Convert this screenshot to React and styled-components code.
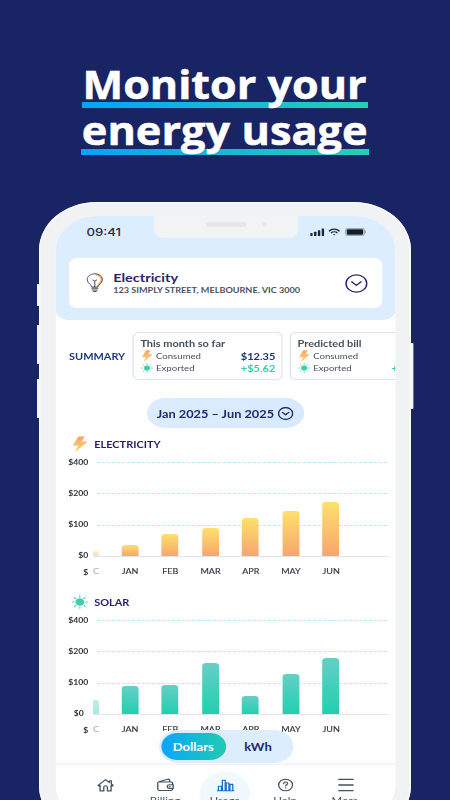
import React from 'react';
import styled, { createGlobalStyle } from 'styled-components';

const GlobalStyle = createGlobalStyle`
	* {
		box-sizing: border-box;
	}
	body {
		margin: 0;
		background: #182463;
		font-family: Lato, 'Liberation Sans', sans-serif;
	}
	svg {
		display: block;
		flex: none;
	}
`;

const Page = styled.div`
	width: 450px;
	height: 800px;
	overflow: hidden;
	background: #182463;
`;

const Heading = styled.h1`
	height: 202px;
	margin: 0;
	padding-top: 61px;
	display: flex;
	flex-direction: column;
	align-items: center;
	font: 700 39px/47px 'Open Sans', 'Noto Sans', sans-serif;
	color: #fff;
	-webkit-text-stroke: 0.5px #fff;
`;

const HeadingLine = styled.span`
	display: flex;
	justify-content: center;
	width: ${(p) => p.$width}px;
	height: 47px;
	white-space: nowrap;
	background: linear-gradient(90deg, #06a2fb, #25d0b2) 0 41px / 100% 6px no-repeat;

	span {
		transform: translateY(${(p) => p.$shift || 0}px) scaleX(${(p) => p.$stretch});
	}
`;

// the whole handset is laid out at 310 wide and stretched horizontally
const Phone = styled.div`
	position: relative;
	width: 310px;
	height: 632px;
	margin-left: 39px;
	padding: 14px 13px 14px 14px;
	border-radius: 48px;
	background: #f1f2f3;
	box-shadow: inset 0 0 2px 1px #fcfdfe;
	transform: scaleX(1.2);
	transform-origin: 0 0;
`;

const SideButton = styled.i`
	position: absolute;
	${(p) => (p.$right ? 'right' : 'left')}: -1.7px;
	top: ${(p) => p.$top}px;
	width: 2.5px;
	height: ${(p) => p.$height}px;
	border-radius: 1px;
	background: #f5f7fa;
`;

const Screen = styled.div`
	position: relative;
	height: 604px;
	border-radius: 34px;
	overflow: hidden;
	background: #fefeff;
	display: flex;
	flex-direction: column;
`;

const Header = styled.div`
	height: 104px;
	flex: none;
	border-radius: 0 0 10px 10px;
	background: #dceefe;
	padding: 0 11px;
`;

const Notch = styled.div`
	position: absolute;
	left: 82px;
	top: -2px;
	width: 120px;
	height: 24px;
	border-radius: 0 0 8px 8px;
	background: #f2f3f4;
	display: flex;
	align-items: center;
	padding: 0 0 3px 43px;
	gap: 13px;
`;

const Speaker = styled.i`
	width: 34px;
	height: 5px;
	border-radius: 3px;
	background: #e6e7e9;
`;

const Camera = styled.i`
	width: 4px;
	height: 5px;
	border-radius: 50%;
	background: #e8e9eb;
`;

const StatusBar = styled.div`
	height: 42px;
	padding: 11px 13.5px 0 14.5px;
	display: flex;
	justify-content: space-between;
	font: 500 11px/11px Inter, sans-serif;
	color: #1f2c3a;
`;

const StatusIcons = styled.div`
	display: flex;
	align-items: center;
	height: 10px;
	gap: 3.4px;
`;

const AccountCard = styled.div`
	height: 50px;
	border-radius: 7px;
	background: #fff;
	display: flex;
	align-items: center;
	padding: 0 12px 0 13.5px;
`;

const AccountInfo = styled.div`
	flex: 1;
	padding: 1px 0 0 8.3px;
	white-space: nowrap;
`;

const AccountName = styled.div`
	font-weight: 700;
	font-size: 12.1px;
	line-height: 14px;
	color: #2a2169;
`;

const Address = styled.div`
	font-weight: 700;
	font-size: 7.6px;
	line-height: 11px;
	color: #4a535e;
`;

const Summary = styled.div`
	height: 60px;
	flex: none;
	padding: 12px 0 0 11px;
	display: flex;
	align-items: center;
`;

const SummaryTitle = styled.div`
	width: 53px;
	flex: none;
	font-weight: 700;
	font-size: 9.15px;
	color: #1f3a85;
`;

const BillCard = styled.div`
	width: 125px;
	height: 48px;
	flex: none;
	margin-right: 6px;
	padding: 4px 5px 0 5.5px;
	border: 1px solid #dde4e8;
	border-radius: 5px;
	background: #fefefe;
`;

const BillTitle = styled.div`
	font-weight: 700;
	font-size: 9.15px;
	line-height: 13px;
	color: #43505a;
	white-space: nowrap;
`;

const BillRow = styled.div`
	height: 12px;
	display: flex;
	align-items: center;
	gap: 3px;
	font-size: 8px;
	color: #47525c;

	b {
		margin-left: auto;
		font-size: 9.2px;
		color: ${(p) => (p.$credit ? '#35cfa9' : '#1f3379')};
	}
`;

const PeriodPill = styled.div`
	align-self: flex-start;
	flex: none;
	width: 131.5px;
	height: 30px;
	margin: 18px 0 6px 75.5px;
	border-radius: 15px;
	background: linear-gradient(90deg, #dcebfd, #d6eafe);
	display: flex;
	align-items: center;
	justify-content: center;
	gap: 3.5px;
	font-weight: 700;
	font-size: 10.65px;
	color: #1b2a6d;
	white-space: nowrap;
`;

const Section = styled.div`
	height: ${(p) => p.$height}px;
	flex: none;
`;

const SectionTitle = styled.div`
	height: 20px;
	padding-left: 13px;
	display: flex;
	align-items: center;
	gap: 5px;
	font-weight: 700;
	font-size: 9.15px;
	color: #231f69;
`;

const Graph = styled.div`
	display: flex;
	padding: 7.5px 6px 0 0;
`;

const Axis = styled.div`
	width: 27px;
	margin: -15px 4px 0 0;
	text-align: right;
	font-weight: 700;
	font-size: 7.2px;
	line-height: 31px;
	color: #30353c;

	div {
		height: 31px;
	}
	div:nth-child(4) {
		padding-right: ${(p) => (p.$nudge ? 3.8 : 0)}px;
	}
	div:nth-child(5) {
		line-height: 4px;
	}
`;

const dash = 'repeating-linear-gradient(90deg, #bfe8fb 0 2.6px, #f3fbff 2.6px 4.2px)';

const Plot = styled.div`
	height: 95px;
	display: flex;
	align-items: flex-end;
	border-bottom: 1px solid #e2e5ea;
	background: ${dash} 3px 0 / 100% 1px no-repeat, ${dash} 3px 31px / 100% 1px no-repeat,
		${dash} 3px 63px / 100% 1px no-repeat;
`;

const Months = styled.div`
	display: flex;
	height: 12px;
	margin-top: 9.6px;
	font-size: 7.5px;
	line-height: 12px;
	color: #353b44;
	-webkit-text-stroke: 0.15px #353b44;
`;

const Slot = styled.div`
	width: ${(p) => (p.$first ? 14.2 : 33.5)}px;
	display: flex;
	justify-content: ${(p) => (p.$first ? 'flex-start' : 'center')};
	opacity: ${(p) => (p.$first ? 0.4 : 1)};
`;

const Bar = styled.div`
	width: ${(p) => (p.$first ? 4.5 : 14)}px;
	height: ${(p) => p.$value}px;
	border-radius: ${(p) => (p.$first ? '0 2px 0 0' : '3px 3px 0 0')};
	background: ${(p) =>
		p.$tone === 'solar' ? 'linear-gradient(#65cfc6, #22cfaf)' : 'linear-gradient(#fee06d, #f7a56d)'};
`;

const ToggleShade = styled.div`
	position: absolute;
	left: 84px;
	top: 515px;
	width: 88px;
	height: 20px;
	background: #fefeff;
`;

const Toggle = styled.div`
	position: absolute;
	left: 85.5px;
	top: 514px;
	width: 112.5px;
	height: 33px;
	padding: 3px 2px;
	border-radius: 17px;
	background: #dcedfe;
	display: flex;
	font-weight: 700;
	font-size: 10.9px;
`;

const ToggleOption = styled.div`
	width: 54px;
	height: 27px;
	border-radius: 14px;
	display: flex;
	align-items: center;
	justify-content: center;
	color: ${(p) => (p.$active ? '#fff' : '#20296c')};
	background: ${(p) => (p.$active ? 'linear-gradient(90deg, #08a6fb, #22cbb0)' : 'none')};
`;

const TabBar = styled.div`
	flex: 1;
	display: flex;
	padding-left: 16px;
	border-top: 1px solid #f0f2f4;
	box-shadow: 0 -1px 3px #f3f5f7;
	background: #fefeff;
`;

const Tab = styled.div`
	width: 50px;
	flex: none;
	display: flex;
	flex-direction: column;
	align-items: center;
	padding-top: 12.5px;
	font-size: 9.5px;
	line-height: 12px;
	color: #46576a;
	background: ${(p) => (p.$active ? 'radial-gradient(circle at 25px 28px, #f0fafe 20px, transparent 22px)' : 'none')};

	span {
		margin-top: 1.5px;
	}
`;

const ChevronCircle = ({ width, height, stroke }) => (
	<svg width={width} height={height} viewBox="0 0 18 18" fill="none" stroke="#29256b" strokeWidth={stroke}>
		<circle cx="9" cy="9" r="8.2" />
		<path d="M5.3 7.4L9 10.8l3.7-3.4" strokeLinecap="round" strokeLinejoin="round" />
	</svg>
);

const Bulb = () => (
	<svg width="15" height="20" viewBox="0 0 15 20" fill="none">
		<path d="M8 1.6c3.2 0 5.3 2.4 5.1 5.4-.2 2.6-2.4 3.8-3.3 6.2" stroke="#f9c15f" strokeWidth="1.9" />
		<path
			d="M5 14c-.2-2.4-3.6-3.6-3.8-7C1 3.4 3.8.8 7.5.8s6.4 2.6 6.3 6.1c-.1 3.4-3.5 4.6-3.8 7.1z"
			stroke="#342c60"
			strokeWidth=".75"
		/>
		<path d="M5.7 6.8l1.8 1.4 1.8-1.4M7.5 8.2V14" stroke="#342c60" strokeWidth=".8" />
		<path d="M5.2 15.2h4.7M5.4 17h4.2M6.4 18.5h2.2" stroke="#5b4a68" strokeWidth="1.2" strokeLinecap="round" />
	</svg>
);

const Bolt = ({ size = 16, width = 14 }) => (
	<svg width={width} height={size} viewBox="0 0 14 16" preserveAspectRatio="none">
		<defs>
			<linearGradient id="bolt" x1="0" y1="0" x2="0" y2="1">
				<stop offset="0" stopColor="#f9a568" />
				<stop offset="1" stopColor="#fcd76a" />
			</linearGradient>
		</defs>
		<path
			d="M6 .8h4.6L8.2 5.9h4.6L3.6 15.3l2.5-6.1H1.6z"
			fill="url(#bolt)"
			stroke="url(#bolt)"
			strokeWidth=".7"
			strokeLinejoin="round"
		/>
	</svg>
);

const Sun = ({ size = 16, width = 16 }) => (
	<svg width={width} height={size} viewBox="0 0 16 16" stroke="#4bcfb4" strokeWidth="1.1" strokeLinecap="round">
		<circle cx="8" cy="8" r="3.7" fill="#3ccdb1" />
		<path d="M8 .7v1.6M8 13.7v1.6M.7 8h1.6M13.7 8h1.6M2.8 2.8l1.3 1.3M11.9 11.9l1.3 1.3M2.8 13.2l1.3-1.3M11.9 4.1l1.3-1.3" />
	</svg>
);

const SignalIcons = () => (
	<StatusIcons>
		<svg width="12" height="8" viewBox="0 0 12 8" fill="#1b2732">
			<rect x="0" y="5" width="2" height="3" rx=".5" />
			<rect x="3.2" y="3.8" width="2" height="4.2" rx=".5" />
			<rect x="6.4" y="2.2" width="2" height="5.8" rx=".5" />
			<rect x="9.6" y=".6" width="2" height="7.4" rx=".5" />
		</svg>
		<svg width="10" height="8" viewBox="0 0 11 8" fill="none" stroke="#1b2732" strokeWidth="1.3" preserveAspectRatio="none">
			<path d="M.6 3.2c2.8-2.8 7-2.8 9.8 0M2.5 5.1c1.7-1.6 4.3-1.6 6 0" />
			<path d="M4.3 6.3h2.4L5.5 7.6z" fill="#1b2732" stroke="none" />
		</svg>
		<svg width="18" height="8" viewBox="0 0 18 8">
			<rect x=".4" y=".4" width="15.8" height="7.2" rx="1.8" fill="#eef6fc" stroke="#7f8b95" strokeWidth=".7" />
			<rect x="1.4" y="1.3" width="13.8" height="5.4" rx="1" fill="#151f28" />
			<path d="M17 2.6c.9.4.9 2.4 0 2.8z" fill="#7f8b95" />
		</svg>
	</StatusIcons>
);

const tabIcon = { width: 15, height: 16, viewBox: '0 0 15 16', fill: 'none', strokeWidth: 1.1, strokeLinecap: 'round', strokeLinejoin: 'round' };

const HomeIcon = () => (
	<svg {...tabIcon} stroke="#42545f">
		<path d="M1.2 8.4L7.5 2.6l3.2 3V3.8h1.6V7l1.5 1.4-.8.8-.9-.8v5.5H9V10.2a1.5 1.5 0 00-3 0v3.7H2.9V8.4l-.9.8z" />
	</svg>
);

const WalletIcon = () => (
	<svg {...tabIcon} stroke="#42545f">
		<path d="M2 5h10.3c.6 0 1 .4 1 1v1.8M13.3 11.4V12c0 .9-.6 1.5-1.4 1.5H2.4c-.8 0-1.4-.6-1.4-1.5V5.9C1 5.3 1.4 5 2 4.8l7.2-2.6c.8-.2 1.4.2 1.6.8l.4 1.8" />
		<path d="M13.8 7.7h-3a1.9 1.9 0 000 3.8h3z" />
		<circle cx="11" cy="9.6" r=".3" />
	</svg>
);

const UsageIcon = () => (
	<svg {...tabIcon} stroke="#1c6fc4">
		<path d="M.6 13.7h13.8M1.5 13.5V9.2H4v4.3M4.8 13.5V3.2h2.4v10.3M8 13.5V6h2.3v7.5M11.1 13.5V7.4h2.4v6.1" />
	</svg>
);

const HelpIcon = () => (
	<svg {...tabIcon} width="13" viewBox="1 0 13 16" stroke="#42545f">
		<circle cx="7.5" cy="8" r="5.8" />
		<path d="M5.9 6.6c.1-2.1 3.3-2 3.3 0 0 1.2-1.6 1.1-1.6 2.4M7.6 10.9v.1" />
	</svg>
);

const MenuIcon = () => (
	<svg {...tabIcon} stroke="#42545f" strokeWidth="1.3">
		<path d="M1.9 2.4h11.8M1.9 8h11.8M1.9 13.6h11.8" />
	</svg>
);

const months = ['C', 'JAN', 'FEB', 'MAR', 'APR', 'MAY', 'JUN'];

const Area = styled.div`
	flex: 1;
`;

function Chart({ title, icon, tone, values, height }) {
	return (
		<Section $height={height}>
			<SectionTitle>
				{icon}
				{title}
			</SectionTitle>
			<Graph>
				<Axis $nudge={tone === 'solar'}>
					<div>$400</div>
					<div>$200</div>
					<div>$100</div>
					<div>$0</div>
					<div>$</div>
				</Axis>
				<Area>
					<Plot>
						{values.map((value, i) => (
							<Slot key={i} $first={i === 0}>
								<Bar $first={i === 0} $value={value} $tone={tone} />
							</Slot>
						))}
					</Plot>
					<Months>
						{months.map((month, i) => (
							<Slot key={month} $first={i === 0}>
								{month}
							</Slot>
						))}
					</Months>
				</Area>
			</Graph>
		</Section>
	);
}

function Bill({ title, consumed, exported }) {
	return (
		<BillCard>
			<BillTitle>{title}</BillTitle>
			<BillRow>
				<Bolt width={10} size={12} />
				Consumed
				<b>{consumed}</b>
			</BillRow>
			<BillRow $credit>
				<Sun width={10} size={12} />
				Exported
				<b>{exported}</b>
			</BillRow>
		</BillCard>
	);
}

function App() {
	return (
		<Page>
			<GlobalStyle />
			<Heading>
				<HeadingLine $width={286} $stretch={1.105} $shift={-1}>
					<span>Monitor your</span>
				</HeadingLine>
				<HeadingLine $width={288} $stretch={1.11} $shift={-2}>
					<span>energy usage</span>
				</HeadingLine>
			</Heading>
			<Phone>
				<SideButton $top={82} $height={22} />
				<SideButton $top={123} $height={39} />
				<SideButton $top={177} $height={39} />
				<SideButton $right $top={141} $height={66} />
				<Screen>
					<Header>
						<StatusBar>
							<span>09:41</span>
							<SignalIcons />
						</StatusBar>
						<AccountCard>
							<Bulb />
							<AccountInfo>
								<AccountName>Electricity</AccountName>
								<Address>123 SIMPLY STREET, MELBOURNE. VIC 3000</Address>
							</AccountInfo>
							<ChevronCircle width={19} height={19} stroke={1.2} />
						</AccountCard>
					</Header>
					<Notch>
						<Speaker />
						<Camera />
					</Notch>
					<Summary>
						<SummaryTitle>SUMMARY</SummaryTitle>
						<Bill title="This month so far" consumed="$12.35" exported="+$5.62" />
						<Bill title="Predicted bill" exported="+$15.62" />
					</Summary>
					<PeriodPill>
						Jan 2025 – Jun 2025
						<ChevronCircle width={13} height={13} stroke={1.7} />
					</PeriodPill>
					<Chart
						title="ELECTRICITY"
						icon={<Bolt width={14} />}
						tone="electricity"
						height={158.4}
						values={[5, 11, 22, 28, 38, 45, 54]}
					/>
					<Chart title="SOLAR" icon={<Sun width={14} />} tone="solar" height={171.6} values={[14, 28, 29, 51, 18, 40, 56]} />
					<TabBar>
						<Tab>
							<HomeIcon />
						</Tab>
						<Tab>
							<WalletIcon />
							<span>Billing</span>
						</Tab>
						<Tab $active>
							<UsageIcon />
							<span>Usage</span>
						</Tab>
						<Tab>
							<HelpIcon />
							<span>Help</span>
						</Tab>
						<Tab>
							<MenuIcon />
							<span>More</span>
						</Tab>
					</TabBar>
					<ToggleShade />
					<Toggle>
						<ToggleOption $active>Dollars</ToggleOption>
						<ToggleOption>kWh</ToggleOption>
					</Toggle>
				</Screen>
			</Phone>
		</Page>
	);
}

export default App;
